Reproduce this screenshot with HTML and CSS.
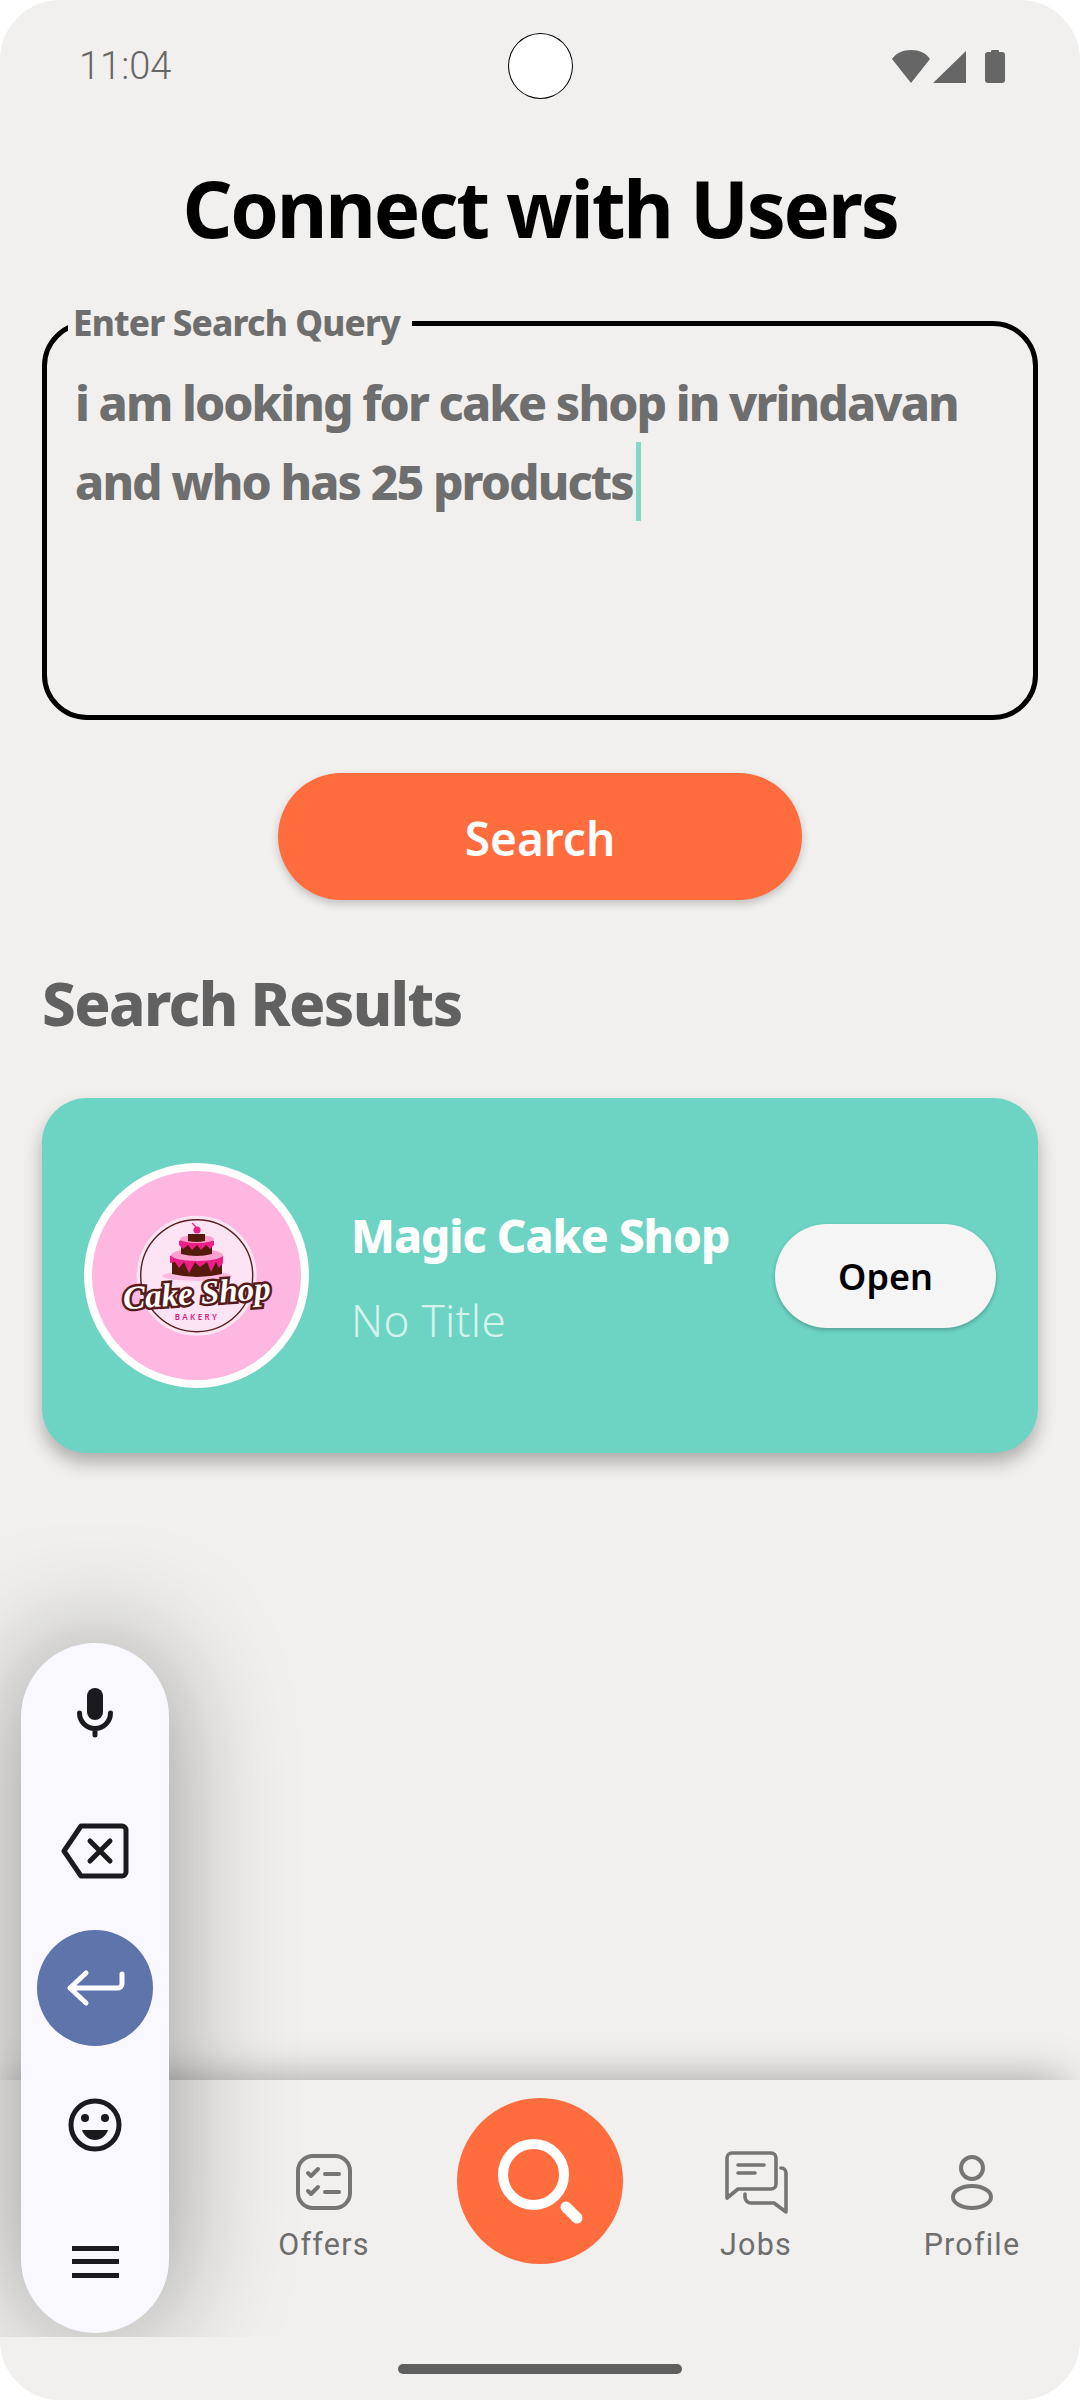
FILE: index.html
```html
<!DOCTYPE html>
<html lang="en">
<head>
    <meta charset="UTF-8">
    <meta name="viewport" content="width=device-width, initial-scale=1.0">
    <title>Connect with Users</title>
    <link rel="stylesheet" href="styles.css">
</head>
<body>
    <div class="screen">
        <div class="status-bar">
            <span class="clock">11:04</span>
            <span class="camera"></span>
            <div class="status-icons">
                <svg width="38" height="33" viewBox="0 0 38 33"><path d="M0 9C4 3 11 0 19 0s15 3 19 9L19 33Z" fill="#666"/></svg>
                <svg width="33" height="33" viewBox="0 0 33 33"><path d="M33 1V33H0Z" fill="#666"/></svg>
                <svg class="battery" width="20" height="34" viewBox="0 0 20 34"><path d="M6 3V2a1 1 0 0 1 1-1h6a1 1 0 0 1 1 1v1h3a3 3 0 0 1 3 3v25a3 3 0 0 1-3 3H3a3 3 0 0 1-3-3V6a3 3 0 0 1 3-3Z" fill="#666"/></svg>
            </div>
        </div>

        <div class="main">
            <h1>Connect with Users</h1>

            <fieldset class="query-box">
                <legend>Enter Search Query</legend>
                <div class="query-text">i am looking for cake shop in vrindavan<br>and who has 25 products<span class="caret"></span></div>
            </fieldset>

            <button type="button" class="search-btn">Search</button>

            <h2>Search Results</h2>

            <div class="card">
                <div class="avatar">
                    <svg width="209" height="209" viewBox="0 0 209 209">
                        <circle cx="104.7" cy="104.7" r="60" fill="#fde4f5"/>
                        <circle cx="104.7" cy="104.7" r="56" fill="none" stroke="#5a1f1f" stroke-width="1.4"/>
                        <ellipse cx="105" cy="105" rx="35" ry="5" fill="#fdbde2"/>
                        <path d="M80 86H130V103Q105 109 80 103Z" fill="#561a0c"/>
                        <path d="M78 85Q105 72 131 85V92L127 97 124 91 119 101 115 91 108 96 103 91 97 102 92 91 87 97 83 91 78 92Z" fill="#ed1e86"/>
                        <ellipse cx="105" cy="84" rx="26" ry="6" fill="#fba0cf"/>
                        <path d="M89 72H120V83Q105 87 89 83Z" fill="#561a0c"/>
                        <path d="M87 70Q105 62 122 70V74L118 78 114 74 109 79 105 74 100 79 96 74 91 78 87 74Z" fill="#ed1e86"/>
                        <ellipse cx="105" cy="68" rx="17" ry="4" fill="#fba0cf"/>
                        <path d="M96 63H113V70Q105 72 96 70Z" fill="#561a0c"/>
                        <circle cx="105" cy="59" r="3.6" fill="#ed1e86"/>
                        <path d="M100 52L104 56" stroke="#ed1e86" stroke-width="1.2" fill="none"/>
                        <text class="logo-script" x="105" y="133" text-anchor="middle" transform="rotate(-4 105 126)">Cake Shop</text>
                        <text class="logo-sub" x="105" y="149" text-anchor="middle">BAKERY</text>
                    </svg>
                </div>
                <div class="card-info">
                    <div class="card-name">Magic Cake Shop</div>
                    <div class="card-title">No Title</div>
                </div>
                <button type="button" class="open-btn">Open</button>
            </div>
        </div>

        <div class="nav">
            <div class="nav-item"></div>
            <div class="nav-item">
                <div class="nav-icon">
                    <svg width="56" height="56" viewBox="0 0 56 56" fill="none" stroke="#757575" stroke-width="4" stroke-linecap="round" stroke-linejoin="round">
                        <rect x="2" y="2" width="52" height="52" rx="15"/>
                        <path d="M12 19l3 3 7-7M12 37l3 3 7-7M29 20H43M29 38H43"/>
                    </svg>
                </div>
                <span>Offers</span>
            </div>
            <div class="nav-item">
                <div class="fab">
                    <svg width="166" height="166" viewBox="0 0 166 166" fill="none" stroke="#fff" stroke-width="10">
                        <circle cx="76.5" cy="76.5" r="30.5"/>
                        <path d="M109 109L120 120" stroke-width="11" stroke-linecap="round"/>
                    </svg>
                </div>
            </div>
            <div class="nav-item">
                <div class="nav-icon">
                    <svg width="63" height="63" viewBox="0 0 63 63" fill="none" stroke="#757575" stroke-width="3.6" stroke-linecap="round" stroke-linejoin="round">
                        <path d="M2 47V7a5 5 0 0 1 5-5H46a5 5 0 0 1 5 5V33a5 5 0 0 1-5 5H13Z"/>
                        <path d="M13 14H39M13 22H30"/>
                        <path d="M56 17a5 5 0 0 1 5 5V61L49 52H26a6 6 0 0 1-6-6V43"/>
                    </svg>
                </div>
                <span>Jobs</span>
            </div>
            <div class="nav-item">
                <div class="nav-icon">
                    <svg width="42" height="55" viewBox="0 0 42 55" fill="none" stroke="#757575" stroke-width="4">
                        <circle cx="21" cy="13" r="11"/>
                        <ellipse cx="21" cy="42" rx="19" ry="11"/>
                    </svg>
                </div>
                <span>Profile</span>
            </div>
        </div>

        <div class="gesture-bar"><span class="home-pill"></span></div>

        <div class="float-clip">
            <div class="float-keys">
                <div class="key">
                    <svg width="40" height="52" viewBox="0 0 40 52" fill="none" stroke="#1b1b1f" stroke-width="5" stroke-linecap="round">
                        <rect x="12" y="0" width="16" height="32" rx="8" fill="#1b1b1f" stroke="none"/>
                        <path d="M4.5 25a15.5 15.5 0 0 0 31 0M20 41V47"/>
                    </svg>
                </div>
                <div class="key">
                    <svg width="68" height="56" viewBox="0 0 68 56" fill="none" stroke="#1b1b1f" stroke-width="5" stroke-linecap="round" stroke-linejoin="round">
                        <path d="M20 3H61a4 4 0 0 1 4 4V49a4 4 0 0 1-4 4H20L3 28Z"/>
                        <path d="M29 18L49 38M49 18L29 38"/>
                    </svg>
                </div>
                <div class="key key-enter">
                    <svg width="116" height="116" viewBox="0 0 116 116" fill="none" stroke="#fff" stroke-width="5" stroke-linecap="round" stroke-linejoin="round">
                        <path d="M33 58H81a4 4 0 0 0 4-4V44M49 43L33 58 49 73"/>
                    </svg>
                </div>
                <div class="key">
                    <svg width="54" height="54" viewBox="0 0 54 54">
                        <circle cx="27" cy="27" r="24" fill="none" stroke="#1b1b1f" stroke-width="5"/>
                        <circle cx="17" cy="20" r="4" fill="#1b1b1f"/>
                        <circle cx="37" cy="20" r="4" fill="#1b1b1f"/>
                        <path d="M14 32H40C38 38 33 42 27 42S16 38 14 32Z" fill="#1b1b1f"/>
                    </svg>
                </div>
                <div class="key">
                    <svg width="47" height="32" viewBox="0 0 47 32" fill="#1b1b1f">
                        <rect width="47" height="5" y="0"/>
                        <rect width="47" height="5" y="13"/>
                        <rect width="47" height="5" y="27"/>
                    </svg>
                </div>
            </div>
        </div>
    </div>
</body>
</html>
```

FILE: styles.css
```css
* {
    box-sizing: border-box;
}
body {
    margin: 0;
    background: #fff;
    font-family: "Noto Sans", Arial, sans-serif;
}
.screen {
    position: relative;
    width: 1080px;
    height: 2400px;
    display: flex;
    flex-direction: column;
    background: #f1f0ee;
    border-radius: 60px;
    overflow: hidden;
}

/* status bar */
.status-bar {
    height: 132px;
    padding: 0 75px;
    display: grid;
    grid-template-columns: 1fr auto 1fr;
    align-items: center;
}
.clock {
    margin-left: 4px;
    font-family: Roboto, sans-serif;
    font-weight: 300;
    font-size: 38px;
    color: #666;
}
.camera {
    width: 65px;
    height: 66px;
    background: #fff;
    border: 1px solid #000;
    border-radius: 50%;
}
.status-icons {
    display: flex;
    justify-content: flex-end;
    align-items: center;
    gap: 3px;
}
.status-icons svg {
    display: block;
}
.battery {
    margin-left: 16px;
}

/* main */
.main {
    flex: 1;
    padding: 0 42px;
    display: flex;
    flex-direction: column;
}
h1 {
    margin: 31px 0 49px;
    text-align: center;
    font-size: 78px;
    line-height: 90px;
    font-weight: 700;
    letter-spacing: -2.2px;
    color: #000;
}
.query-box {
    margin: 0;
    padding: 0 28px;
    height: 418px;
    border: 5px solid #000;
    border-radius: 45px;
    min-width: 0;
}
.query-box legend {
    padding: 0 12px 0 5px;
    margin-left: -7px;
    font-size: 35px;
    line-height: 42px;
    font-weight: 800;
    letter-spacing: -0.8px;
    color: #6e6e6e;
}
.query-text {
    margin-top: 19px;
    font-size: 48px;
    line-height: 79px;
    font-weight: 800;
    letter-spacing: -1.9px;
    color: #6e6e6e;
}
.caret {
    display: inline-block;
    width: 5px;
    height: 79px;
    margin-left: 3px;
    vertical-align: top;
    background: #84d6c6;
}
.search-btn {
    align-self: center;
    width: 524px;
    height: 127px;
    margin-top: 53px;
    padding-top: 3px;
    border: none;
    border-radius: 64px;
    background: #ff6d3f;
    color: #fff;
    font-family: inherit;
    font-size: 46px;
    font-weight: 600;
    box-shadow: 0 4px 8px rgba(0, 0, 0, 0.2);
}
h2 {
    margin: 68px 0 60px;
    font-size: 60px;
    line-height: 70px;
    font-weight: 800;
    letter-spacing: -1.6px;
    color: #616161;
}
.card {
    height: 355px;
    padding: 0 42px;
    display: flex;
    align-items: center;
    border-radius: 45px;
    background: #6dd4c4;
    box-shadow: 0 10px 18px rgba(0, 0, 0, 0.28);
}
.avatar {
    flex: none;
    width: 225px;
    height: 225px;
    border: 8px solid #fff;
    border-radius: 50%;
    background: #feb7e0;
}
.avatar svg {
    display: block;
}
.logo-script {
    font-family: "Liberation Serif", serif;
    font-style: italic;
    font-weight: 700;
    font-size: 33px;
    fill: #fff;
    stroke: #561a1a;
    stroke-width: 5px;
    paint-order: stroke;
}
.logo-sub {
    font-family: "Noto Sans", sans-serif;
    font-weight: 600;
    font-size: 8px;
    letter-spacing: 2.4px;
    fill: #e0187f;
}
.card-info {
    flex: 1;
    margin-left: 42px;
}
.card-name {
    margin-top: -2px;
    font-size: 46px;
    line-height: 60px;
    font-weight: 800;
    letter-spacing: -1px;
    color: #fff;
}
.card-title {
    margin-top: 30px;
    font-size: 44px;
    line-height: 50px;
    font-weight: 300;
    letter-spacing: 0.3px;
    color: #d5f2ed;
}
.open-btn {
    flex: none;
    width: 221px;
    height: 104px;
    padding-top: 3px;
    border: none;
    border-radius: 52px;
    background: #f5f5f5;
    color: #000;
    font-family: inherit;
    font-size: 36px;
    font-weight: 600;
    box-shadow: 0 2px 4px rgba(0, 0, 0, 0.25);
}

/* bottom nav */
.nav {
    height: 257px;
    padding-top: 70px;
    display: grid;
    grid-template-columns: repeat(5, 216px);
    background: #f1f0ee;
    box-shadow: 0 -16px 40px -16px rgba(0, 0, 0, 0.34);
}
.nav-item {
    display: flex;
    flex-direction: column;
    align-items: center;
    font-family: Roboto, sans-serif;
    font-weight: 450;
    font-size: 30.5px;
    line-height: 36px;
    letter-spacing: 1.2px;
    color: #6e6e6e;
}
.nav-icon {
    height: 64px;
    margin-bottom: 13px;
    display: flex;
    align-items: center;
}
.nav-icon svg {
    display: block;
}
.fab {
    width: 166px;
    height: 166px;
    margin-top: -52px;
    border-radius: 50%;
    background: #ff6d3f;
}
.gesture-bar {
    position: relative;
    height: 63px;
    padding-top: 27px;
    display: flex;
    justify-content: center;
    background: #f1f0ee;
}
.home-pill {
    width: 284px;
    height: 10px;
    border-radius: 5px;
    background: #5f5f5f;
}

/* floating keyboard keys, lies over the page */
.float-clip {
    position: absolute;
    left: 0;
    top: 0;
    width: 100%;
    height: 2337px;
    overflow: hidden;
    pointer-events: none;
}
.float-keys {
    position: absolute;
    left: 21px;
    top: 1643px;
    width: 148px;
    height: 690px;
    padding: 13px 0 15px;
    display: flex;
    flex-direction: column;
    gap: 21px;
    align-items: center;
    border-radius: 74px;
    background: #f9f8fe;
    box-shadow: 0 0 120px rgba(0, 0, 0, 0.38);
}
.key {
    width: 116px;
    height: 116px;
    flex: none;
    display: flex;
    align-items: center;
    justify-content: center;
}
.key svg {
    display: block;
}
.key-enter {
    border-radius: 50%;
    background: #5e74aa;
}
```
